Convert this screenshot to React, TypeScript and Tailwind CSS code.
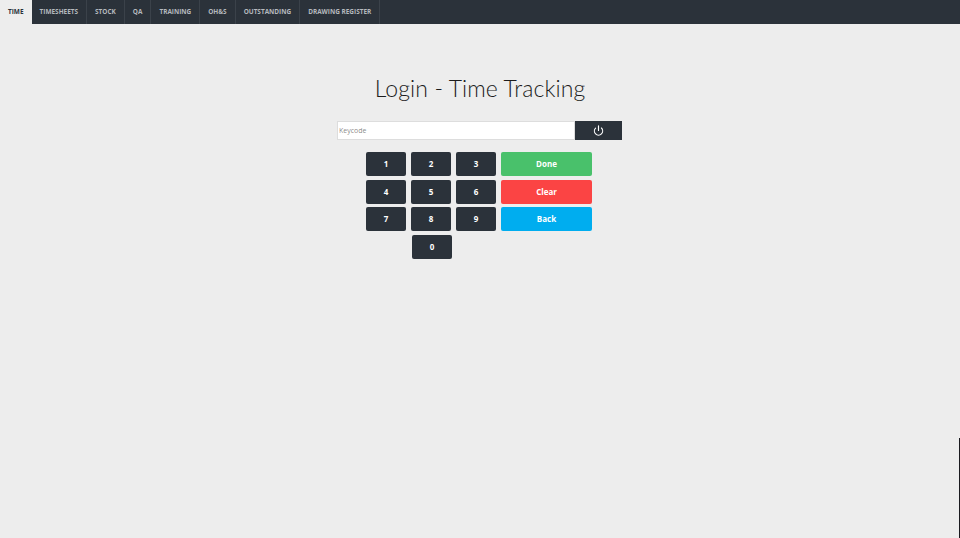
import React from "react";
import { Power } from "lucide-react";

const tabs = ["TIME", "TIMESHEETS", "STOCK", "QA", "TRAINING", "OH&S", "OUTSTANDING", "DRAWING REGISTER"];

const NumKey = ({ n, className = "" }: { n: string; className?: string }) => (
  <button className={`w-10 h-6 bg-[#2b323a] rounded-[2px] text-white text-[8px] font-bold ${className}`}>{n}</button>
);

export default function App() {
  return (
    <div className="relative h-[538px] bg-[#ededed] font-['Open_Sans',sans-serif] overflow-hidden">
      <nav className="flex h-6 bg-[#2b323a]">
        {tabs.map((t, i) => (
          <div
            key={t}
            className={`flex items-center px-2 text-[6.45px] font-bold ${
              i === 0 ? "bg-[#ededed] text-[#2b323a]" : "border-r border-[#3b424a] text-[#b5b9be]"
            }`}
          >
            {t}
          </div>
        ))}
      </nav>

      <h1 className="mt-[49px] text-center text-[23px] font-light leading-[30px] tracking-[0.1px] text-[#1c1c1c] font-['Lato',sans-serif]">
        Login - Time Tracking
      </h1>

      <div className="flex justify-center mt-[18px] mr-px">
        <input
          placeholder="Keycode"
          className="w-[238px] h-[19px] bg-white border border-[#ddd] px-px text-[7px]"
        />
        <button className="w-[47px] h-[19px] bg-[#2b323a] flex items-center justify-center text-white">
          <Power size={11} strokeWidth={2.5} />
        </button>
      </div>

      <div className="flex justify-center gap-[5px] mt-3 mr-[2px]">
        <div className="grid grid-cols-3 gap-x-[5px] gap-y-[3.7px] w-[130px]">
          {["1", "2", "3", "4", "5", "6", "7", "8", "9"].map((n) => (
            <NumKey key={n} n={n} />
          ))}
          <div />
          <NumKey n="0" className="ml-px" />
        </div>
        <div className="flex flex-col gap-[3.7px] w-[91px] text-white text-[8px] font-bold">
          <button className="h-6 bg-[#49c16b] rounded-[2px]">Done</button>
          <button className="h-6 bg-[#fb4444] rounded-[2px]">Clear</button>
          <button className="h-6 bg-[#00adef] rounded-[2px]">Back</button>
        </div>
      </div>

      <div className="absolute right-0 bottom-0 w-px h-[100px] bg-[#1a1a1f]" />
    </div>
  );
}
